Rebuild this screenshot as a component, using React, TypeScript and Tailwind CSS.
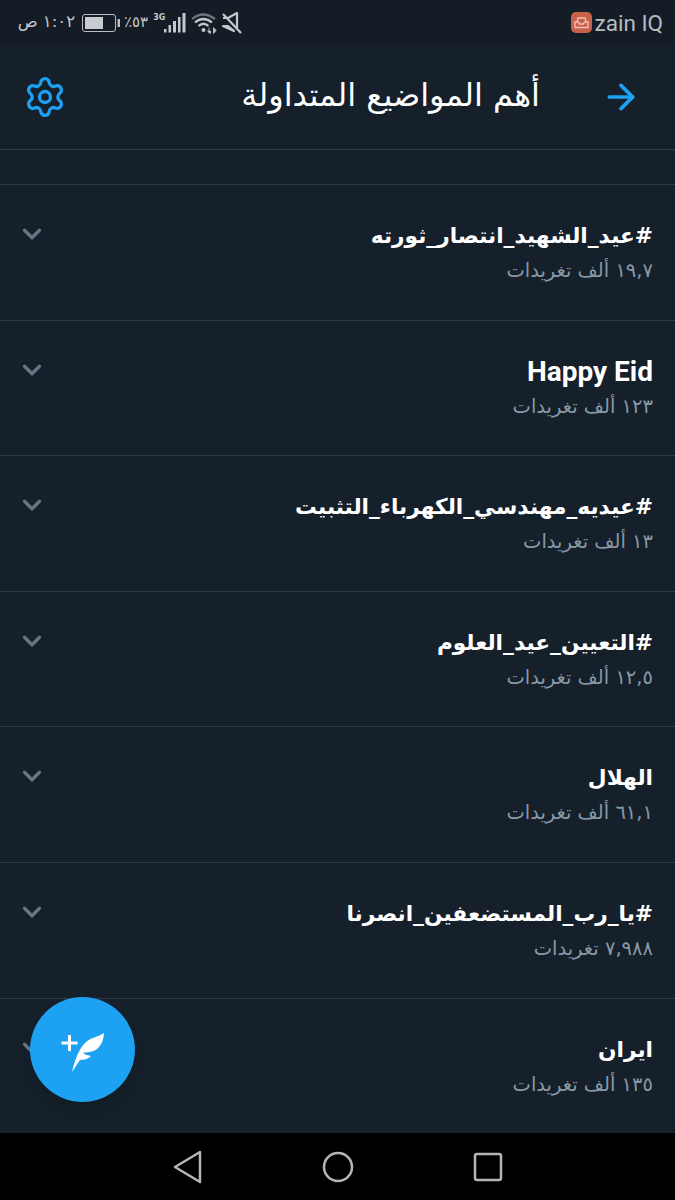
import { ArrowRight, ChevronDown, Settings } from 'lucide-react';

const TRENDS = [
  { title: '#عيد_الشهيد_انتصار_ثورته', count: '١٩,٧ ألف تغريدات' },
  { title: 'Happy Eid', count: '١٢٣ ألف تغريدات', latin: true },
  { title: '#عيديه_مهندسي_الكهرباء_التثبيت', count: '١٣ ألف تغريدات' },
  { title: '#التعيين_عيد_العلوم', count: '١٢,٥ ألف تغريدات' },
  { title: 'الهلال', count: '٦١,١ ألف تغريدات' },
  { title: '#يا_رب_المستضعفين_انصرنا', count: '٧,٩٨٨ تغريدات' },
  { title: 'ايران', count: '١٣٥ ألف تغريدات' },
];

function StatusBar() {
  return (
    <div className="flex h-[45px] shrink-0 items-center justify-between bg-[#141c26] pl-[14px] pr-[12px] text-[#c4c8cc]">
      <div className="flex items-center">
        <span dir="rtl" className="w-[61px] text-[16.5px] leading-none">١:٠٢ ص</span>
        <svg width="39" height="20" viewBox="0 0 39 20" className="ml-[7px]" aria-hidden>
          <rect x="0.5" y="1.5" width="33" height="17" rx="2.5" fill="none" stroke="#b9bdc1" strokeWidth="1" />
          <rect x="3" y="4" width="18" height="12" fill="#c9cccf" />
          <rect x="35.500" y="6" width="2.500" height="8" fill="#b9bdc1" />
        </svg>
        <span className="ml-[3px] text-[15px] leading-none">٪٥٣</span>
        <span className="mb-[9px] ml-[5px] text-[8px] font-bold leading-none">3G</span>
        <svg width="23" height="22" viewBox="0 0 23 22" className="ml-[-1px]" aria-hidden>
          <rect x="0" y="17" width="2.500" height="3.500" fill="#c4c8cc" />
          <rect x="4.500" y="13" width="2.500" height="7.500" fill="#c4c8cc" />
          <rect x="9" y="9" width="3" height="11.500" fill="#c4c8cc" />
          <rect x="14" y="5" width="2.500" height="15.500" fill="#c4c8cc" />
          <rect x="18.500" y="1" width="3" height="19.500" fill="#c4c8cc" />
        </svg>
        <svg width="26" height="22" viewBox="0 0 26 22" className="ml-[4px]" aria-hidden>
          <path d="M1 7 Q12 -2 24 7" fill="none" stroke="#6f757b" strokeWidth="2.200" />
          <path d="M4 10.500 Q12 3.500 21 10.500" fill="none" stroke="#c4c8cc" strokeWidth="2.200" />
          <path d="M7.500 14 Q12.500 9.500 17.500 14" fill="none" stroke="#c4c8cc" strokeWidth="2.200" />
          <circle cx="12.500" cy="18" r="2" fill="#c4c8cc" />
          <path d="M18 15.500v6M19.500 21.500l-3-2.500h3zM22.500 15.500v6l2.500-3z" fill="#c4c8cc" stroke="#c4c8cc" strokeWidth="0.800" />
        </svg>
        <svg width="22" height="22" viewBox="0 0 22 22" className="ml-[4px]" aria-hidden>
          <path d="M2 2 L20 21" stroke="#c4c8cc" strokeWidth="2.200" />
          <path d="M2 6h5l9-5v15M13 19l-6-5H2z" fill="none" stroke="#c4c8cc" strokeWidth="2.200" strokeLinejoin="round" />
        </svg>
      </div>
      <div className="flex items-center gap-[3px]">
        <svg width="21" height="21" viewBox="0 0 21 21" aria-hidden>
          <rect width="21" height="21" rx="5" fill="#c9604a" />
          <path d="M4 10h3.500l1 2h4l1-2H17v5.500H4zM6 10l1-4h7l1 4" fill="none" stroke="#eac3b8" strokeWidth="1.300" />
        </svg>
        <span className="mt-[2px] font-['Roboto',sans-serif] text-[22.5px] leading-none text-[#b6bbc0]">zain IQ</span>
      </div>
    </div>
  );
}

function Header() {
  return (
    <header className="flex h-[105px] shrink-0 items-center border-b border-[#303b45] pl-[23px] pr-[34px]">
      <Settings size={44} strokeWidth={1.8} className="text-[#1da1f2]" />
      <h1 dir="rtl" className="ml-auto mr-[60px] mb-[4px] text-[32px] font-normal leading-none text-white">
        أهم المواضيع المتداولة
      </h1>
      <ArrowRight size={40} strokeWidth={2.2} className="ml-[1px] text-[#1da1f2]" />
    </header>
  );
}

function TrendRow({ title, count, latin }: { title: string; count: string; latin?: boolean }) {
  return (
    <div className="flex h-[135.6px] shrink-0 items-start border-b border-[#303b45] pl-[17px] pr-[22px]">
      <ChevronDown size={30} strokeWidth={2.6} className="mt-[34px] text-[#657786]" />
      <div dir="rtl" className="ml-auto pt-[32px] text-right">
        {latin ? (
          <p className="font-['Roboto',sans-serif] text-[28px] font-bold leading-[38px] text-white">{title}</p>
        ) : (
          <p className="text-[21.700px] font-bold leading-[38px] text-white">{title}</p>
        )}
        <p className="mt-[2px] text-[19.500px] leading-[28px] text-[#8899a6]">{count}</p>
      </div>
    </div>
  );
}

export default function App() {
  return (
    <div className="relative flex h-[1200px] w-[675px] flex-col overflow-hidden bg-[#15202b] font-['DejaVu_Sans','Noto_Sans',sans-serif]">
      <StatusBar />
      <Header />
      <div className="h-[35px] shrink-0 border-b border-[#303b45]" />
      <main className="min-h-0 flex-1 overflow-hidden">
        {TRENDS.map((trend) => (
          <TrendRow key={trend.title} title={trend.title} count={trend.count} latin={trend.latin} />
        ))}
      </main>
      <nav className="flex h-[67px] shrink-0 items-center bg-black pl-[173px]">
        <svg width="30" height="34" viewBox="0 0 30 34" aria-hidden>
          <path d="M2 17 L27 2 V32 Z" fill="none" stroke="#b5b5b5" strokeWidth="2.500" strokeLinejoin="round" />
        </svg>
        <svg width="32" height="32" viewBox="0 0 32 32" className="ml-[119px]" aria-hidden>
          <circle cx="16" cy="16" r="14" fill="none" stroke="#b5b5b5" strokeWidth="2.500" />
        </svg>
        <svg width="30" height="30" viewBox="0 0 30 30" className="ml-[119px]" aria-hidden>
          <rect x="2" y="2" width="26" height="26" rx="2" fill="none" stroke="#b5b5b5" strokeWidth="2.500" />
        </svg>
      </nav>
      <button
        type="button"
        aria-label="Tweet"
        className="absolute left-[30px] top-[997px] flex h-[105px] w-[105px] items-center justify-center rounded-full bg-[#1da1f2] shadow-lg"
      >
        <svg width="105" height="105" viewBox="0 0 105 105" aria-hidden>
          <path d="M31.500 46h16M39.500 38v16" stroke="#fff" strokeWidth="3" fill="none" />
          <path d="M74 36 C68 40 62 40 56 45 C50 50 45 62 42 75 C44 72 47 67 50 63 C54 63 58 62 61 59 L55 57.500 L53 55.500 C66 56 73 50 74 36 Z" fill="#fff" />
        </svg>
      </button>
    </div>
  );
}
